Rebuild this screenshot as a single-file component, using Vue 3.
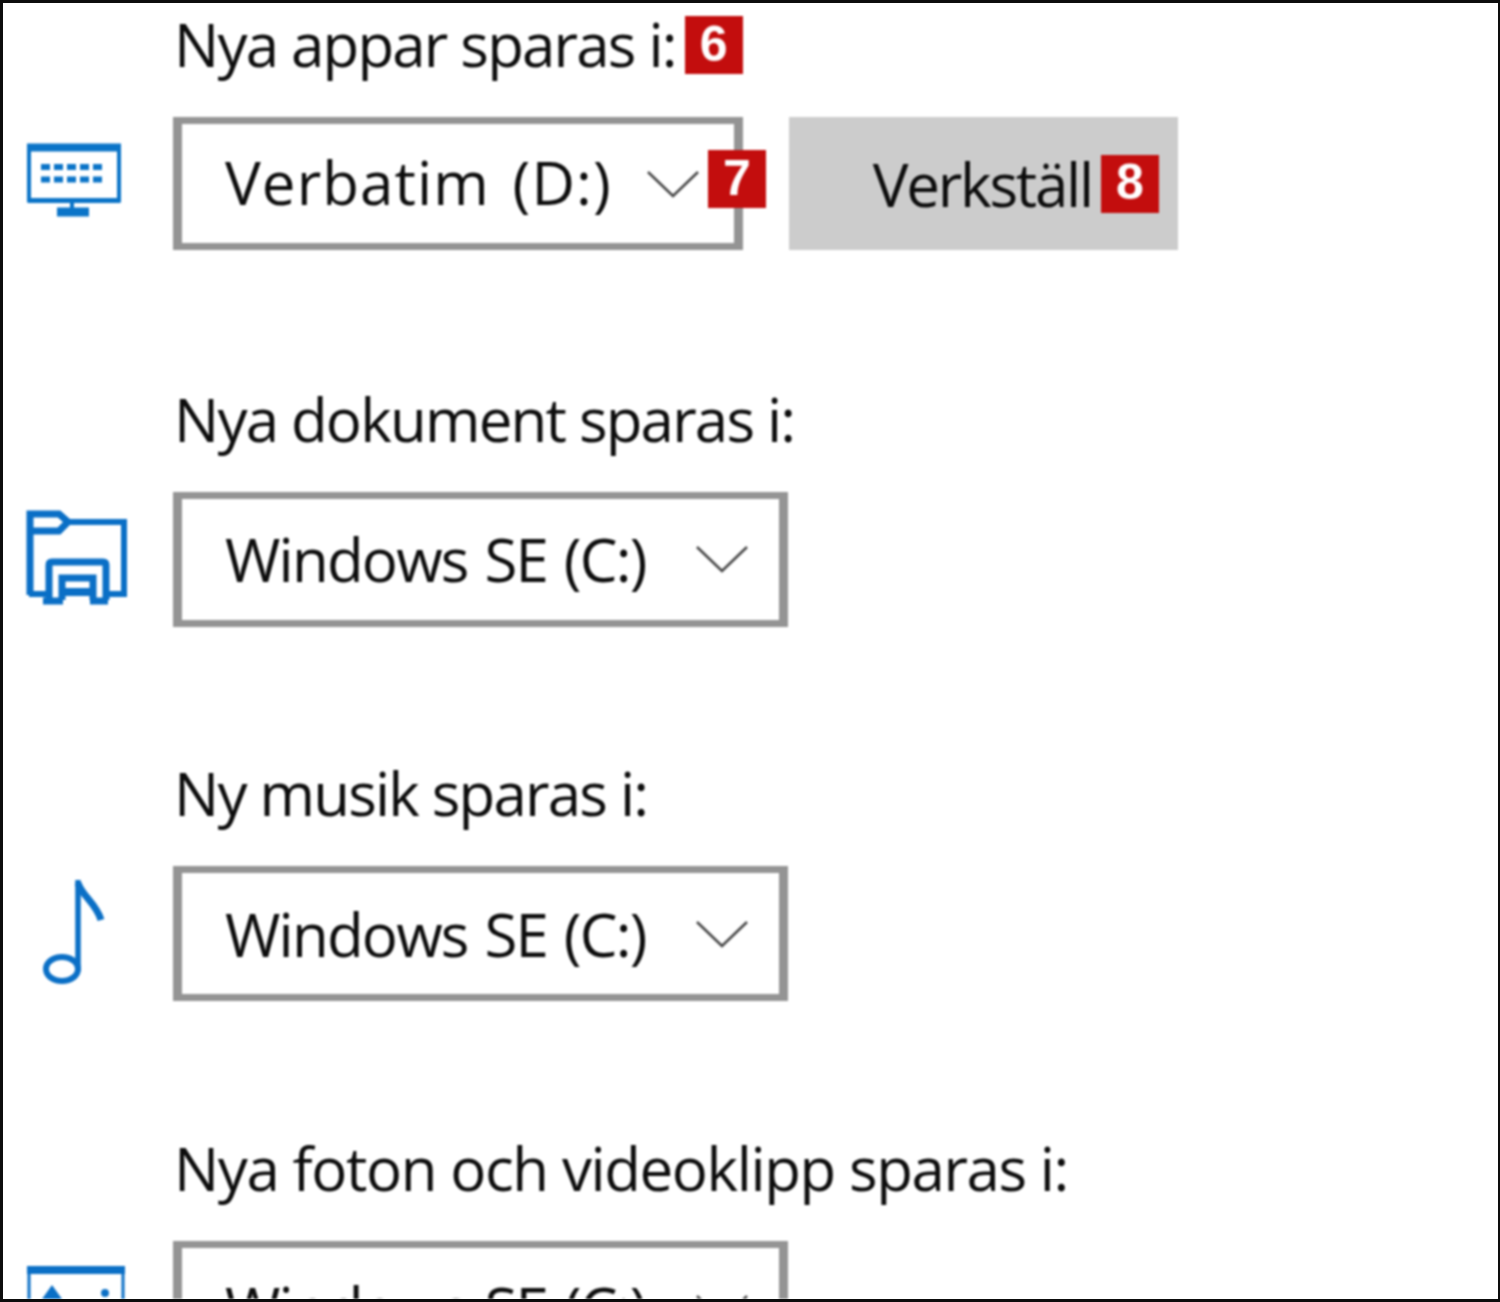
<script setup>
const groups = [
  { label: 'Nya appar sparas i:', badge: '6', value: 'Verbatim (D:)', icon: 'monitor', first: true },
  { label: 'Nya dokument sparas i:', value: 'Windows SE (C:)', icon: 'folder' },
  { label: 'Ny musik sparas i:', value: 'Windows SE (C:)', icon: 'music' },
  { label: 'Nya foton och videoklipp sparas i:', value: 'Windows SE (C:)', icon: 'picture', wide: true },
]
const keyXs = [17, 30, 43, 56, 69]
</script>

<template>
  <div class="page">
    <div class="content">
      <section v-for="g in groups" :key="g.label" class="group" :class="{ first: g.first, wide: g.wide }">
        <div class="label-row">
          <span class="label">{{ g.label }}</span>
          <span v-if="g.badge" class="badge">{{ g.badge }}</span>
        </div>
        <div class="control-row">
          <svg class="icon" viewBox="0 0 112 112" width="112" height="112" aria-hidden="true">
            <g v-if="g.icon === 'monitor'" fill="none" stroke="#0a74c8">
              <path d="M5 21.5V73.5H95V21.5" stroke-width="4" />
              <path d="M3 20.500H97" stroke-width="8" />
              <path d="M4 73.500H96" stroke-width="5" />
              <path d="M48 76V82" stroke-width="4" />
              <path d="M33 85H65" stroke-width="9" />
              <g stroke-width="6">
                <path v-for="x in keyXs" :key="'a' + x" :d="`M${x} 40h9`" />
                <path v-for="x in keyXs" :key="'b' + x" :d="`M${x} 52.500h9`" />
              </g>
            </g>
            <g v-else-if="g.icon === 'folder'" fill="none" stroke="#0a6fc6" stroke-width="6">
              <path d="M6 92V11H35L44 19L35 28H6" stroke-width="7" />
              <path d="M44 19H100V91H5" />
              <path d="M25 97V62Q25 59 28 59H79Q82 59 82 62V97" stroke-width="7" fill="#fff" />
              <path d="M38 97V75H69V97" stroke-width="7" />
              <path d="M38 89H69" stroke-width="8" />
              <path d="M19 98H39M66 98H84" stroke-width="7" />
            </g>
            <g v-else-if="g.icon === 'music'" fill="none" stroke="#0a6fc6" stroke-width="5.500">
              <path d="M54 2V93" />
              <path d="M54 5C58 18 72 25 77 42" stroke-width="7" />
              <ellipse cx="38" cy="91" rx="16" ry="12" stroke-width="6" />
            </g>
            <g v-else fill="none" stroke="#0a6fc6">
              <path d="M3 18H101" stroke-width="8" />
              <path d="M5 18V112M99 18V112" stroke-width="3" />
              <path d="M28 33L18 47H38Z" fill="#0a6fc6" stroke="none" />
              <circle cx="81" cy="41" r="4" fill="#0a6fc6" stroke="none" />
            </g>
          </svg>
          <div class="select">
            <span class="value">{{ g.value }}</span>
            <svg class="chevron" viewBox="0 0 54 28" width="54" height="28" aria-hidden="true">
              <path d="M2 2L27 26L52 2" fill="none" stroke="#444" stroke-width="2.500" />
            </svg>
            <span v-if="g.first" class="badge over">7</span>
          </div>
          <button v-if="g.first" class="apply" type="button">
            <span>Verkställ</span>
            <span class="badge">8</span>
          </button>
        </div>
      </section>
    </div>
  </div>
</template>

<style>
html, body { margin: 0; background: #fff; }
</style>

<style scoped>
.page {
  box-sizing: border-box;
  width: 1500px;
  height: 1302px;
  overflow: hidden;
  border: 3px solid #0d0d0d;
  border-right-width: 2px;
  background: #fff;
  color: #0c0c0c;
  font-family: "Open Sans", "Noto Sans", sans-serif;
  font-size: 60px;
  letter-spacing: -1.8px;
}
.content {
  height: 100%;
  overflow: hidden;
  filter: blur(0.8px);
}
.group {
  height: 374.5px;
  display: flex;
  flex-direction: column;
  padding-left: 170px;
  box-sizing: border-box;
}
.label-row {
  height: 114px;
  flex: none;
  display: flex;
  align-items: flex-start;
  gap: 9px;
  padding-left: 1px;
  box-sizing: border-box;
}
.label {
  line-height: 82px;
  letter-spacing: -1.8px;
  white-space: nowrap;
}
.wide .label { letter-spacing: -1.4px; }
.badge {
  width: 58px;
  height: 58px;
  flex: none;
  margin-top: 13px;
  padding-bottom: 3px;
  box-sizing: border-box;
  display: flex;
  align-items: center;
  justify-content: center;
  background: #c30d0d;
  color: #fff;
  font-family: "Liberation Sans", sans-serif;
  font-weight: 700;
  font-size: 50px;
  letter-spacing: 0;
}
.control-row {
  display: flex;
  align-items: flex-start;
  gap: 46px;
  position: relative;
}
.icon {
  position: absolute;
  left: -149px;
  top: 11.500px;
}
.first .icon { top: 10px; }
.select {
  box-sizing: border-box;
  width: 615px;
  height: 135px;
  flex: none;
  border: 7px solid #949494;
  border-width: 7px 9px;
  display: flex;
  align-items: center;
  justify-content: space-between;
  padding: 0 30px 0 43px;
  position: relative;
  background: #fff;
}
.value {
  white-space: nowrap;
  word-spacing: 3px;
}
.first .select {
  width: 570px;
  height: 133px;
  padding-right: 34px;
}
.first .value {
  letter-spacing: 1.1px;
  word-spacing: 6px;
  margin-top: -3px;
}
.badge.over {
  position: absolute;
  left: 526px;
  top: 26px;
  margin: 0;
}
.apply {
  width: 389px;
  height: 133px;
  flex: none;
  box-sizing: border-box;
  border: 0;
  padding: 0 19px 0 0;
  background: #cccccc;
  color: inherit;
  font: inherit;
  letter-spacing: -2.2px;
  display: flex;
  align-items: center;
  justify-content: flex-end;
  gap: 9px;
}
.apply .badge { margin-top: 0; }
</style>
